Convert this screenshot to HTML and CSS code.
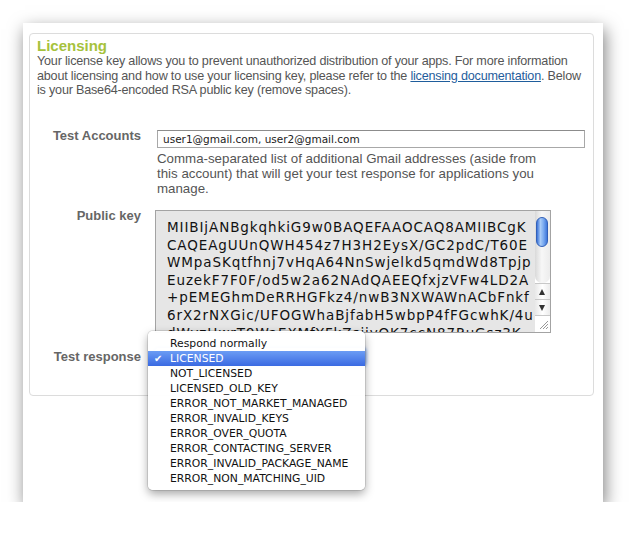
FILE: index.html
```html
<!DOCTYPE html>
<html lang="en">
<head>
    <meta charset="UTF-8">
    <title>Licensing</title>
    <link rel="stylesheet" href="styles.css">
</head>
<body>

    <div class="window">
        <div class="panel">
            <h3 class="title">Licensing</h3>
            <p class="intro">Your license key allows you to prevent unauthorized distribution of your apps. For more information<br>about licensing and how to use your licensing key, please refer to the <a href="#">licensing documentation</a>. Below<br>is your Base64-encoded RSA public key (remove spaces).</p>

            <!-- Test accounts -->
            <div class="row accounts">
                <label class="row-label" for="accounts">Test Accounts</label>
                <div class="field">
                    <input class="text-input" type="text" id="accounts" value="user1@gmail.com, user2@gmail.com">
                    <p class="hint">Comma-separated list of additional Gmail addresses (aside from<br>this account) that will get your test response for applications you<br>manage.</p>
                </div>
            </div>

            <!-- Public key -->
            <div class="row pubkey">
                <label class="row-label">Public key</label>
                <div class="field">
                    <div class="keybox">
                        <div class="keytext">MIIBIjANBgkqhkiG9w0BAQEFAAOCAQ8AMIIBCgK
CAQEAgUUnQWH454z7H3H2EysX/GC2pdC/T60E
WMpaSKqtfhnj7vHqA64NnSwjelkd5qmdWd8Tpjp
EuzekF7F0F/od5w2a62NAdQAEEQfxjzVFw4LD2A
+pEMEGhmDeRRHGFkz4/nwB3NXWAWnACbFnkf
6rX2rNXGic/UFOGWhaBjfabH5wbpP4fFGcwhK/4u
dWyzHwrT9WaEXMfYFkZsiivOK7ccN87RuGsz3K</div>
                        <div class="scrollbar">
                            <div class="track"><div class="thumb"></div></div>
                            <div class="arrow arrow-up"></div>
                            <div class="arrow arrow-down"></div>
                            <div class="grip">
                                <svg width="15" height="15" viewBox="0 0 15 15">
                                    <line x1="13" y1="5" x2="5" y2="13" stroke="#999" stroke-width="1"/>
                                    <line x1="13" y1="8" x2="8" y2="13" stroke="#999" stroke-width="1"/>
                                    <line x1="13" y1="11" x2="11" y2="13" stroke="#999" stroke-width="1"/>
                                </svg>
                            </div>
                        </div>
                    </div>
                </div>
            </div>

            <!-- Test response (menu is open) -->
            <div class="row response">
                <label class="row-label">Test response</label>
                <div class="field">
                    <div class="select-box"></div>
                    <ul class="menu">
                        <li>Respond normally</li>
                        <li class="selected">LICENSED</li>
                        <li>NOT_LICENSED</li>
                        <li>LICENSED_OLD_KEY</li>
                        <li>ERROR_NOT_MARKET_MANAGED</li>
                        <li>ERROR_INVALID_KEYS</li>
                        <li>ERROR_OVER_QUOTA</li>
                        <li>ERROR_CONTACTING_SERVER</li>
                        <li>ERROR_INVALID_PACKAGE_NAME</li>
                        <li>ERROR_NON_MATCHING_UID</li>
                    </ul>
                </div>
            </div>
        </div>
    </div>

</body>
</html>
```

FILE: styles.css
```css
body {
    margin: 0;
    background: #fff;
    font-family: "Liberation Sans", Arial, sans-serif;
}
.window {
    width: 580px;
    height: 479px;
    margin: 23px 0 0 23px;
    padding-top: 10px;
    box-sizing: border-box;
    background: #fff;
    box-shadow: 2px 6px 16px rgba(0, 0, 0, 0.5);
}
.panel {
    height: 363px;
    margin: 0 9px 0 6px;
    padding: 3px 8px 0 7px;
    box-sizing: border-box;
    border: 1px solid #dcdcdc;
    border-radius: 4px;
}
.title {
    margin: 0;
    font-size: 15px;
    line-height: 17px;
    font-weight: bold;
    color: #a6c23c;
}
.intro {
    margin: 0;
    white-space: nowrap;
    font-size: 12.6px;
    letter-spacing: -0.2px;
    line-height: 14.5px;
    color: #555;
}
.intro a {
    color: #1f5d9c;
}
.row {
    display: grid;
    grid-template-columns: 104px 1fr;
    column-gap: 14px;
}
.row-label {
    margin-top: -1px;
    text-align: right;
    font-size: 13px;
    line-height: 14px;
    font-weight: bold;
    color: #666;
}
.accounts {
    margin-top: 32.5px;
}
.text-input {
    display: block;
    width: calc(100% - 2px);
    height: 18px;
    margin: 0 0 0 2px;
    padding: 0 5px;
    box-sizing: border-box;
    border: 1px solid #a8a8a8;
    border-top-color: #8c8c8c;
    border-radius: 0;
    font-family: "DejaVu Sans", sans-serif;
    font-size: 10.5px;
    color: #222;
    outline: none;
}
.hint {
    margin: 2.5px 0 0 2px;
    white-space: nowrap;
    font-size: 13.3px;
    line-height: 15px;
    color: #555;
}
.pubkey {
    margin-top: 14.5px;
}
.keybox {
    display: flex;
    width: 396px;
    height: 123px;
    box-sizing: border-box;
    border: 1px solid #a3a3a3;
    background: #e6e6e6;
}
.keytext {
    flex: 1;
    overflow: hidden;
    padding: 8px 0 0 11px;
    white-space: pre;
    font-family: "DejaVu Sans", sans-serif;
    font-size: 13.5px;
    letter-spacing: 0.9px;
    line-height: 17.6px;
    color: #111;
}
.scrollbar {
    display: flex;
    flex-direction: column;
    width: 15px;
    background: #fff;
}
.track {
    height: 73px;
    padding: 6px 0 0 1px;
    box-sizing: border-box;
    background: linear-gradient(to right, #d9d9d9, #f7f7f7 45%, #ececec);
    border-bottom-left-radius: 7px;
    border-bottom-right-radius: 7px;
}
.thumb {
    width: 12px;
    height: 30px;
    box-sizing: border-box;
    border: 1px solid #3260b8;
    border-radius: 6px;
    background: linear-gradient(to right, #3c73d8, #a8cbf7 35%, #7aaaf0 65%, #3f78db);
}
.arrow {
    position: relative;
    height: 16px;
    box-sizing: border-box;
    border-top: 1px solid #c8c8c8;
    background: linear-gradient(to right, #e8e8e8, #fff 50%, #ececec);
}
.arrow::after {
    content: "";
    position: absolute;
    left: 4px;
    top: 5px;
    border-left: 3.5px solid transparent;
    border-right: 3.5px solid transparent;
}
.arrow-up::after {
    border-bottom: 6px solid #333;
}
.arrow-down::after {
    border-top: 6px solid #333;
}
.grip {
    height: 16px;
    border-top: 1px solid #c8c8c8;
    background: #fff;
}
.grip svg {
    display: block;
}
.response {
    margin-top: 16.5px;
}
.response .row-label {
    margin-top: 0;
}
.field {
    position: relative;
}
.select-box {
    width: 210px;
    height: 18px;
    margin-top: -2px;
    border-radius: 4px;
    box-shadow: 0 0 3px 2px rgba(90, 140, 230, 0.6);
}
.menu {
    position: absolute;
    left: -7px;
    top: -18.5px;
    width: 217px;
    margin: 0;
    padding: 5px 0 4px;
    list-style: none;
    background: rgba(255, 255, 255, 0.97);
    border-radius: 5px;
    box-shadow: 0 4px 10px rgba(0, 0, 0, 0.35), 0 0 0 1px rgba(0, 0, 0, 0.1);
}
.menu li {
    position: relative;
    height: 15px;
    padding-left: 22px;
    line-height: 15px;
    font-family: "DejaVu Sans", sans-serif;
    font-size: 10.8px;
    color: #111;
}
.menu li.selected {
    color: #fff;
    background: linear-gradient(#6b9cf4, #3a6ae2);
}
.menu li.selected::before {
    content: "\2714";
    position: absolute;
    left: 6px;
    font-size: 10px;
}
```
